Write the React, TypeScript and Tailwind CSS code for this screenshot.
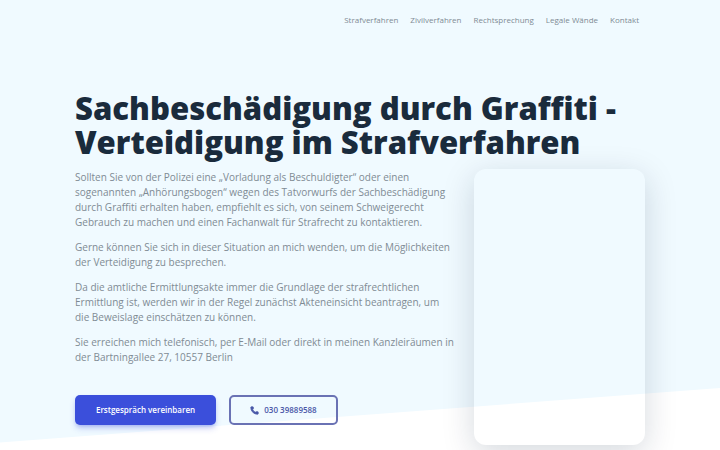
import React from 'react';
import { Phone } from 'lucide-react';

const links = ['Strafverfahren', 'Zivilverfahren', 'Rechtsprechung', 'Legale Wände', 'Kontakt'];

const paragraphs = [
  'Sollten Sie von der Polizei eine „Vorladung als Beschuldigter“ oder einen sogenannten „Anhörungsbogen“ wegen des Tatvorwurfs der Sachbeschädigung durch Graffiti erhalten haben, empfiehlt es sich, von seinem Schweigerecht Gebrauch zu machen und einen Fachanwalt für Strafrecht zu kontaktieren.',
  'Gerne können Sie sich in dieser Situation an mich wenden, um die Möglichkeiten der Verteidigung zu besprechen.',
  'Da die amtliche Ermittlungsakte immer die Grundlage der strafrechtlichen Ermittlung ist, werden wir in der Regel zunächst Akteneinsicht beantragen, um die Beweislage einschätzen zu können.',
  'Sie erreichen mich telefonisch, per E-Mail oder direkt in meinen Kanzleiräumen in der Bartningallee 27, 10557 Berlin',
];

const App: React.FC = () => {
  return (
    <div className="relative h-[450px] w-full overflow-hidden bg-[#f0faff] font-['Open_Sans',sans-serif]">
      {/* Slanted white bottom */}
      <svg className="absolute inset-0" width="720" height="450" viewBox="0 0 720 450">
        <polygon points="0,442.5 720,388 720,450 0,450" fill="#ffffff" />
      </svg>

      <div className="relative">
        {/* Nav */}
        <nav className="flex justify-end gap-3 pt-[13px] pr-[81px] text-[8px] leading-[14px] text-[#7f8b94]">
          {links.map((link) => (
            <a key={link}>{link}</a>
          ))}
        </nav>

        <div className="pl-[75px] pt-[64px]">
          <h1 className="text-[31.1px] font-extrabold leading-[34px] text-[#1a2b3c]">
            Sachbeschädigung durch Graffiti -<br />
            Verteidigung im Strafverfahren
          </h1>

          <div className="mt-[10px] flex items-start">
            <div className="w-[381px] shrink-0 pt-px">
              <div className="space-y-[10px] text-[10px] leading-[15px] text-[#7f8b94]">
                {paragraphs.map((p) => (
                  <p key={p}>{p}</p>
                ))}
              </div>
              <div className="mt-[30px] flex gap-[13px] text-[8px] font-semibold">
                <button className="h-[30px] w-[141px] rounded-[5px] bg-[#3b4fdb] text-white shadow-md shadow-[#3b4fdb]/30">
                  Erstgespräch vereinbaren
                </button>
                <button className="flex h-[30px] w-[109px] items-center justify-center gap-[5px] rounded-[5px] border-2 border-[#6a72b4] text-[#4a58a8]">
                  <Phone className="h-[9px] w-[9px] fill-current" />
                  030 39889588
                </button>
              </div>
            </div>

            {/* Image placeholder card */}
            <div className="ml-[18px] h-[276px] w-[171px] shrink-0 rounded-xl shadow-[0_8px_32px_rgba(0,30,60,0.17)]" />
          </div>
        </div>
      </div>
    </div>
  );
};

export default App;
